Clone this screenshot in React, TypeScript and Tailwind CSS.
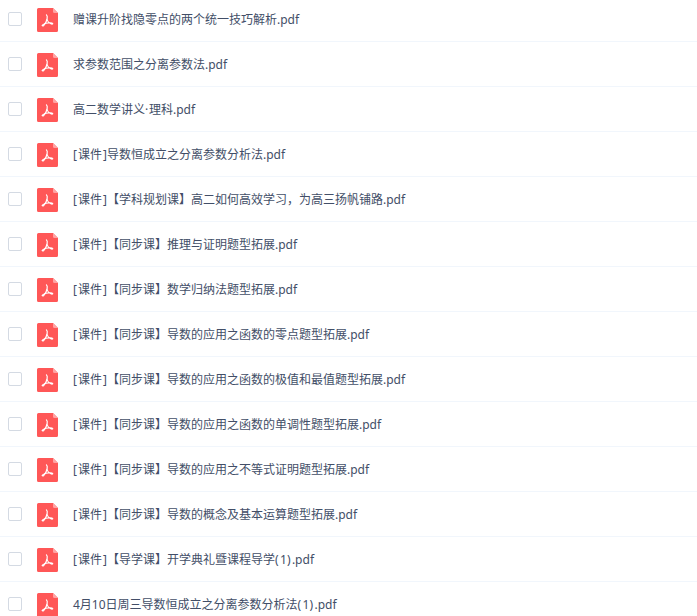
const files: string[] = [
  '赠课升阶找隐零点的两个统一技巧解析.pdf',
  '求参数范围之分离参数法.pdf',
  '高二数学讲义·理科.pdf',
  '[课件]导数恒成立之分离参数分析法.pdf',
  '[课件]【学科规划课】高二如何高效学习，为高三扬帆铺路.pdf',
  '[课件]【同步课】推理与证明题型拓展.pdf',
  '[课件]【同步课】数学归纳法题型拓展.pdf',
  '[课件]【同步课】导数的应用之函数的零点题型拓展.pdf',
  '[课件]【同步课】导数的应用之函数的极值和最值题型拓展.pdf',
  '[课件]【同步课】导数的应用之函数的单调性题型拓展.pdf',
  '[课件]【同步课】导数的应用之不等式证明题型拓展.pdf',
  '[课件]【同步课】导数的概念及基本运算题型拓展.pdf',
  '[课件]【导学课】开学典礼暨课程导学(1).pdf',
  '4月10日周三导数恒成立之分离参数分析法(1).pdf',
];

function PdfIcon() {
  return (
    <svg width="21" height="24" viewBox="0 0 21 24" className="ml-[15px] shrink-0">
      <path d="M1.500 0H16l5 5v17.500a1.500 1.500 0 0 1-1.500 1.500h-18A1.500 1.500 0 0 1 0 22.500v-21A1.500 1.500 0 0 1 1.500 0Z" fill="#ff5757" />
      <path d="M16 0l5 5h-3.500A1.500 1.500 0 0 1 16 3.500Z" fill="#ffa3a3" />
      <g fill="none" stroke="#fff" strokeLinecap="round" strokeLinejoin="round">
        <path d="M9.500 6.900c.9.600.9 2.200.6 4-.5 2.700-2 5-3.500 6.600-.5.500-1.200.4-1.300 0" strokeWidth="1.250" />
        <path d="M5.300 17.400c.7-1.200 3.200-2.100 6-2.400 2.100-.2 4.200 0 4.500.7-.3.500-1.400.4-2.400-.1-1.500-.8-2.700-2.300-3.400-4" strokeWidth="1.100" />
      </g>
    </svg>
  );
}

/* Half-width brackets and the middle dot have their own advance widths. */
function FileName({ name }: { name: string }) {
  return (
    <span className="ml-[15px] whitespace-pre text-[12px] leading-[18px] text-[#424e67]">
      {name.split(/([[\]()·])/).map((part, i) => {
        if (part === '[' || part === '(' || part === ')') {
          return <span key={i} className="inline-block w-[5px]">{part}</span>;
        }
        if (part === ']') {
          return <span key={i} className="inline-block w-[5px] pl-px">{part}</span>;
        }
        if (part === '·') {
          return <span key={i} className="inline-block w-[4px]">{part}</span>;
        }
        return part;
      })}
    </span>
  );
}

export default function App() {
  return (
    <main className="h-[616px] w-full overflow-hidden bg-white font-['Noto_Sans','Noto_Sans_CJK_SC',sans-serif]">
      <ul className="-mt-[3px]">
        {files.map((name) => (
          <li key={name} className="flex h-[45px] items-center border-b border-[#f1f6fc] pt-[2px] pl-2">
            <span className="mb-[2px] size-[14px] shrink-0 rounded-[2px] border border-[#d4dae3] bg-white" />
            <PdfIcon />
            <FileName name={name} />
          </li>
        ))}
      </ul>
    </main>
  );
}
